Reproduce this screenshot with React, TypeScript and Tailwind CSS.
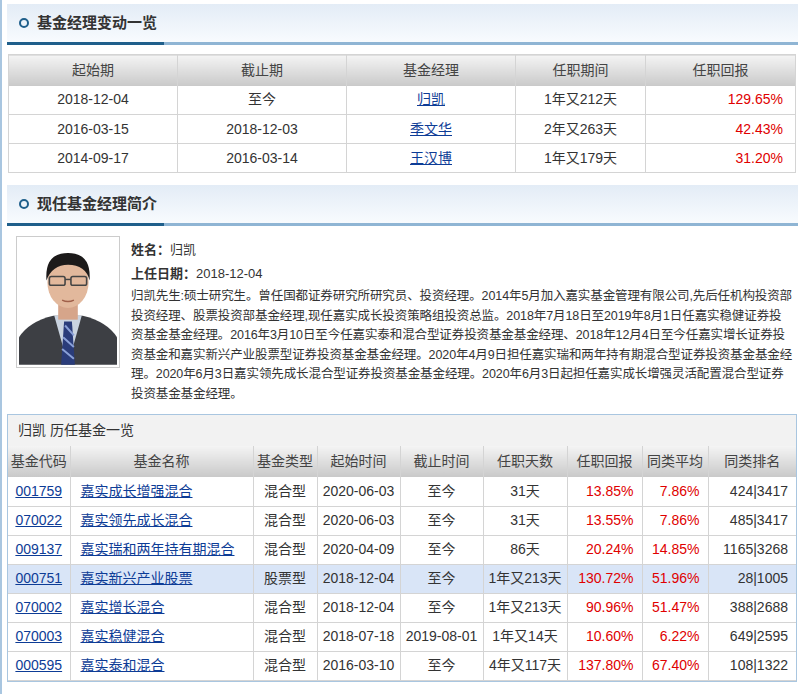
const F = { fontFamily: '"Liberation Sans","Noto Sans CJK SC",sans-serif' };

function PanelHead({ title }: { title: string }) {
  return (
    <div className="h-[41px] flex items-center bg-gradient-to-b from-[#e3ecf6] to-[#f8fbfe] border-b-[3px] border-[#8fb5d4] relative">
      <div className="absolute left-0 bottom-[-3px] h-[3px] w-[157px] bg-[#1f5f8b]" />
      <span className="ml-[12px] w-[10px] h-[10px] rounded-full border-2 border-[#1f5f8b]" />
      <span className="ml-[8px] text-[15px] font-bold text-[#333]">{title}</span>
    </div>
  );
}

const hdr = "bg-gradient-to-b from-[#f4f4f4] to-[#c9c9c9] font-normal text-[#444] border-r border-[#d4d4d4] last:border-r-0";
const td = "border-r border-b border-[#d4d4d4] last:border-r-0";

const changes = [
  ["2018-12-04", "至今", "归凯", "1年又212天", "129.65%"],
  ["2016-03-15", "2018-12-03", "季文华", "2年又263天", "42.43%"],
  ["2014-09-17", "2016-03-14", "王汉博", "1年又179天", "31.20%"],
];

const funds = [
  ["001759", "嘉实成长增强混合", "混合型", "2020-06-03", "至今", "31天", "13.85%", "7.86%", "424|3417"],
  ["070022", "嘉实领先成长混合", "混合型", "2020-06-03", "至今", "31天", "13.55%", "7.86%", "485|3417"],
  ["009137", "嘉实瑞和两年持有期混合", "混合型", "2020-04-09", "至今", "86天", "20.24%", "14.85%", "1165|3268"],
  ["000751", "嘉实新兴产业股票", "股票型", "2018-12-04", "至今", "1年又213天", "130.72%", "51.96%", "28|1005"],
  ["070002", "嘉实增长混合", "混合型", "2018-12-04", "至今", "1年又213天", "90.96%", "51.47%", "388|2688"],
  ["070003", "嘉实稳健混合", "混合型", "2018-07-18", "2019-08-01", "1年又14天", "10.60%", "6.22%", "649|2595"],
  ["000595", "嘉实泰和混合", "混合型", "2016-03-10", "至今", "4年又117天", "137.80%", "67.40%", "108|1322"],
];

function Avatar() {
  return (
    <svg viewBox="0 0 100 128" className="w-full h-full">
      <rect width="100" height="128" fill="#fff" />
      <path d="M0 128 L0 100 Q10 84 35 78 L65 78 Q90 84 100 100 L100 128Z" fill="#3d3f44" />
      <path d="M36 78 L50 128 L64 78Z" fill="#c9d3e0" />
      <path d="M46 84 L54 84 L57 128 L43 128Z" fill="#2a3c7a" />
      <path d="M47 88 L56 98 M45 100 L56 110 M44 112 L56 122" stroke="#8aa0d8" strokeWidth="2" />
      <rect x="40" y="60" width="20" height="22" fill="#d6a58a" />
      <ellipse cx="50" cy="44" rx="21" ry="26" fill="#e2b89c" />
      <path d="M28 42 Q26 14 50 14 Q74 14 72 42 Q68 26 50 26 Q34 26 28 42Z" fill="#1c1a1a" />
      <rect x="31" y="38" width="16" height="9" rx="2" fill="none" stroke="#444" strokeWidth="1.6" />
      <rect x="53" y="38" width="16" height="9" rx="2" fill="none" stroke="#444" strokeWidth="1.6" />
      <path d="M47 41 L53 41" stroke="#444" strokeWidth="1.5" />
      <path d="M44 62 Q50 65 56 62" stroke="#a0604a" strokeWidth="1.5" fill="none" />
    </svg>
  );
}

export default function App() {
  return (
    <div style={F} className="w-[798px] h-[694px] bg-white text-[13px] text-[#333] border-l-2 border-[#a9c6e0] overflow-hidden">
      <div className="pl-[5px] pt-[4px]">
        <PanelHead title="基金经理变动一览" />
        <table className="mt-[9px] ml-[1px] w-[788px] border-collapse border border-[#d4d4d4] text-[14px] text-center">
          <thead>
            <tr className="h-[31px]">
              {["起始期", "截止期", "基金经理", "任职期间", "任职回报"].map((h, i) => (
                <th key={h} className={hdr + " " + ["w-[169px]", "w-[169px]", "w-[169px]", "w-[130px]", ""][i]}>{h}</th>
              ))}
            </tr>
          </thead>
          <tbody>
            {changes.map((r) => (
              <tr key={r[0]} className="h-[29px]">
                <td className={td}>{r[0]}</td>
                <td className={td}>{r[1]}</td>
                <td className={td}><a className="text-[#0d3c96] underline">{r[2]}</a></td>
                <td className={td}>{r[3]}</td>
                <td className={td + " text-right pr-[12px] text-[#e00000]"}>{r[4]}</td>
              </tr>
            ))}
          </tbody>
        </table>
        <div className="h-[12px]" />
        <PanelHead title="现任基金经理简介" />
        <div className="flex pt-[10px] pl-[9px]">
          <div className="w-[104px] h-[132px] border border-[#ccc] p-[2px] shrink-0 bg-white"><Avatar /></div>
          <div className="ml-[11px] w-[662px] text-[13px] leading-[21px]">
            <div className="mt-[3px]"><b>姓名：</b>归凯</div>
            <div className="mt-[3px]"><b>上任日期：</b>2018-12-04</div>
            <p className="mt-[3px] text-[12.5px] leading-[19.5px] tracking-[-0.1px]">
              归凯先生:硕士研究生。曾任国都证券研究所研究员、投资经理。2014年5月加入嘉实基金管理有限公司,先后任机构投资部投资经理、股票投资部基金经理,现任嘉实成长投资策略组投资总监。2018年7月18日至2019年8月1日任嘉实稳健证券投资基金基金经理。2016年3月10日至今任嘉实泰和混合型证券投资基金基金经理、2018年12月4日至今任嘉实增长证券投资基金和嘉实新兴产业股票型证券投资基金基金经理。2020年4月9日担任嘉实瑞和两年持有期混合型证券投资基金基金经理。2020年6月3日嘉实领先成长混合型证券投资基金基金经理。2020年6月3日起担任嘉实成长增强灵活配置混合型证券投资基金基金经理。
            </p>
          </div>
        </div>
        <div className="mt-[10px] w-[790px] border border-[#a9c6e0]">
          <div className="h-[31px] bg-[#f2f2f2] flex items-center pl-[10px] text-[14px]">归凯 历任基金一览</div>
          <table className="w-full border-collapse text-[14px] text-center">
            <thead>
              <tr className="h-[31px]">
                {["基金代码", "基金名称", "基金类型", "起始时间", "截止时间", "任职天数", "任职回报", "同类平均", "同类排名"].map((h, i) => (
                  <th key={h} className={hdr + " " + ["w-[62px]", "w-[183px]", "w-[64px]", "w-[83px]", "w-[83px]", "w-[84px]", "w-[75px]", "w-[66px]", ""][i]}>{h}</th>
                ))}
              </tr>
            </thead>
            <tbody>
              {funds.map((r) => (
                <tr key={r[0]} className={"h-[29px] " + (r[0] === "000751" ? "bg-[#d9e5f7]" : "")}>
                  <td className={td}><a className="text-[#0d3c96] underline">{r[0]}</a></td>
                  <td className={td + " text-left pl-[10px]"}><a className="text-[#0d3c96] underline">{r[1]}</a></td>
                  <td className={td}>{r[2]}</td>
                  <td className={td}>{r[3]}</td>
                  <td className={td}>{r[4]}</td>
                  <td className={td}>{r[5]}</td>
                  <td className={td + " text-right pr-[8px] text-[#e00000]"}>{r[6]}</td>
                  <td className={td + " text-right pr-[8px] text-[#e00000]"}>{r[7]}</td>
                  <td className={td + " text-right pr-[8px]"}>{r[8]}</td>
                </tr>
              ))}
            </tbody>
          </table>
        </div>
      </div>
    </div>
  );
}
